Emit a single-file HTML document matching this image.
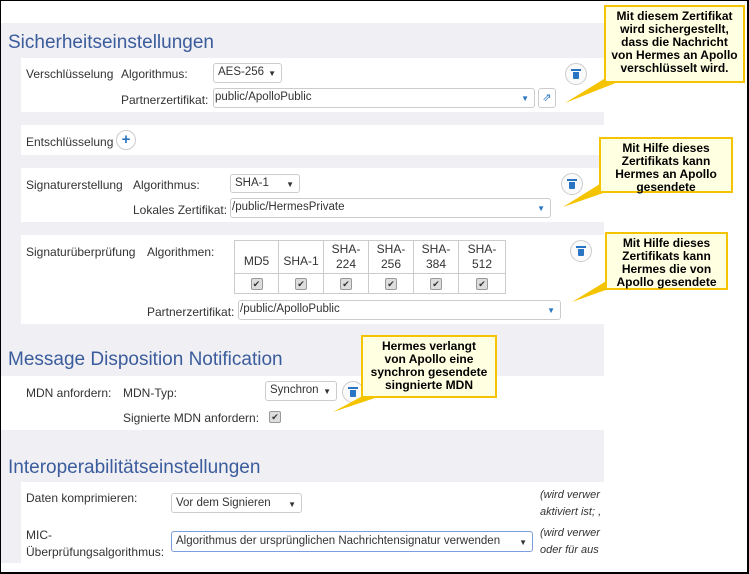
<!DOCTYPE html>
<html><head><meta charset="utf-8"><style>
*{box-sizing:border-box;margin:0;padding:0}
body{width:749px;height:574px;position:relative;overflow:hidden;background:#fff;font-family:"Liberation Sans",sans-serif;font-size:12px;color:#333}
.frame{position:absolute;left:0;top:0;width:749px;height:574px;border:1px solid #000;border-width:1px 2px 2px 1px;z-index:50;pointer-events:none}
.a{position:absolute;white-space:nowrap}
.gray{position:absolute;background:#efeff4}
.panel{position:absolute;background:#fff;left:21px;width:583px}
.h{position:absolute;left:8px;font-size:19px;color:#3b5c9c}
.sel{position:absolute;border:1px solid #ccc;border-radius:3px;background:#fff;padding-left:4px;line-height:17px;overflow:hidden;font-size:11.5px;white-space:nowrap}
.sel .ar{position:absolute;right:5px;top:1px;font-size:8px;color:#333}
.inp .ar{color:#2a74c4}
.trash{position:absolute;width:22px;height:22px;border:1px solid #ccc;border-radius:50%;background:#fafafa}
.trash:before{content:"";position:absolute;left:7px;top:8px;width:6px;height:7px;background:#2a74c4;border-radius:0 0 1px 1px}
.trash:after{content:"";position:absolute;left:5px;top:5px;width:10px;height:2px;background:#2a74c4}
.cb{display:inline-block;width:12px;height:12px;border:1px solid #999;border-radius:2px;background:#ddd;font-size:9px;line-height:10px;text-align:center;color:#333;vertical-align:middle}
.call{position:absolute;background:#ffffe1;border:2px solid #f5c400;font-weight:bold;font-size:12px;color:#000;text-align:center;line-height:13px;z-index:20;padding-top:3px}
table{position:absolute;left:234px;top:240px;border-collapse:collapse}
td{border:1px solid #ccc;text-align:center;font-size:12px;line-height:15px;padding:0;height:33px}
tr.c td{height:20px}
.it{font-style:italic;color:#333}
</style></head><body>
<div class="frame"></div>
<div class="gray" style="left:1px;top:23px;width:603px;height:353px"></div>
<div class="gray" style="left:1px;top:430px;width:603px;height:133px"></div>

<div class="h" style="top:32px">Sicherheitseinstellungen</div>
<div class="panel" style="top:58px;height:54px"></div>
<div class="a" style="left:26px;top:67px">Verschlüsselung</div>
<div class="a" style="left:121px;top:67px">Algorithmus:</div>
<div class="sel" style="left:213px;top:63px;width:69px;height:20px">AES-256<span class="ar">▼</span></div>
<div class="a" style="left:121px;top:93px">Partnerzertifikat:</div>
<div class="sel inp" style="left:213px;top:88px;width:322px;height:20px;padding-left:1px">public/ApolloPublic<span class="ar">▼</span></div>
<div class="a" style="left:538px;top:88px;width:18px;height:20px;border:1px solid #ccc;border-radius:3px;color:#2a74c4;font-size:11px;text-align:center;line-height:18px">⇗</div>
<div class="trash" style="left:565px;top:63px"></div>

<div class="panel" style="top:125px;height:30px"></div>
<div class="a" style="left:26px;top:135px">Entschlüsselung</div>
<div class="a" style="left:116px;top:130px;width:20px;height:20px;border:1px solid #ccc;border-radius:50%;color:#2a74c4;font-weight:bold;font-size:15px;text-align:center;line-height:18px">+</div>

<div class="panel" style="top:168px;height:54px"></div>
<div class="a" style="left:26px;top:178px">Signaturerstellung</div>
<div class="a" style="left:133px;top:178px">Algorithmus:</div>
<div class="sel" style="left:230px;top:174px;width:70px;height:19px">SHA-1<span class="ar">▼</span></div>
<div class="a" style="left:133px;top:203px">Lokales Zertifikat:</div>
<div class="sel inp" style="left:230px;top:198px;width:321px;height:20px;padding-left:1px">/public/HermesPrivate<span class="ar">▼</span></div>
<div class="trash" style="left:561px;top:173px"></div>

<div class="panel" style="top:235px;height:89px"></div>
<div class="a" style="left:26px;top:245px">Signaturüberprüfung</div>
<div class="a" style="left:147px;top:245px">Algorithmen:</div>
<table>
<tr><td style="width:44px;padding-top:8px">MD5</td><td style="width:45px;padding-top:8px">SHA-1</td><td style="width:45px">SHA-<br>224</td><td style="width:45px">SHA-<br>256</td><td style="width:45px">SHA-<br>384</td><td style="width:47px">SHA-<br>512</td></tr>
<tr class="c"><td><span class="cb">✔</span></td><td><span class="cb">✔</span></td><td><span class="cb">✔</span></td><td><span class="cb">✔</span></td><td><span class="cb">✔</span></td><td><span class="cb">✔</span></td></tr>
</table>
<div class="a" style="left:147px;top:305px">Partnerzertifikat:</div>
<div class="sel inp" style="left:238px;top:300px;width:323px;height:20px;padding-left:1px">/public/ApolloPublic<span class="ar">▼</span></div>
<div class="trash" style="left:570px;top:240px"></div>

<div class="h" style="top:349px">Message Disposition Notification</div>
<div class="panel" style="top:376px;height:54px"></div>
<div class="a" style="left:26px;top:386px">MDN anfordern:</div>
<div class="a" style="left:123px;top:386px">MDN-Typ:</div>
<div class="sel" style="left:265px;top:381px;width:72px;height:20px">Synchron<span class="ar">▼</span></div>
<div class="trash" style="left:342px;top:381px"></div>
<div class="a" style="left:123px;top:411px">Signierte MDN anfordern:</div>
<div class="a" style="left:269px;top:409px"><span class="cb">✔</span></div>

<div class="h" style="top:457px">Interoperabilitätseinstellungen</div>
<div class="panel" style="top:482px;height:81px"></div>
<div class="a" style="left:26px;top:491px">Daten komprimieren:</div>
<div class="sel" style="left:171px;top:493px;width:131px;height:20px;line-height:19px">Vor dem Signieren<span class="ar">▼</span></div>
<div class="a it" style="left:540px;top:489px;font-size:11px">(wird verwer</div>
<div class="a it" style="left:540px;top:506px;font-size:11px">aktiviert ist; ,</div>
<div class="a" style="left:26px;top:528px">MIC-</div>
<div class="a" style="left:26px;top:545px">Überprüfungsalgorithmus:</div>
<div class="sel" style="left:171px;top:531px;width:362px;height:21px;border-color:#7c9de0;padding-left:4px;line-height:19px">Algorithmus der ursprünglichen Nachrichtensignatur verwenden<span class="ar">▼</span></div>
<div class="a it" style="left:540px;top:527px;font-size:11px">(wird verwer</div>
<div class="a it" style="left:540px;top:544px;font-size:11px">oder für aus</div>
<div style="position:absolute;left:604px;top:0;width:143px;height:572px;background:#fff;z-index:5"></div>

<svg style="position:absolute;left:0;top:0;z-index:19" width="749" height="574">
<polygon points="612,74 565,103 618,82" fill="#f5c400"/>
<polygon points="603,182 563,207 612,190" fill="#f5c400"/>
<polygon points="608,280 572,302 614,287" fill="#f5c400"/>
<polygon points="370,392 333,412 378,397" fill="#f5c400"/>
</svg>
<div class="call" style="left:604px;top:5px;width:141px;height:78px">Mit diesem Zertifikat<br>wird sichergestellt,<br>dass die Nachricht<br>von Hermes an Apollo<br>verschlüsselt wird.</div>
<div class="call" style="left:599px;top:137px;width:134px;height:56px">Mit Hilfe dieses<br>Zertifikats kann<br>Hermes an Apollo<br>gesendete</div>
<div class="call" style="left:605px;top:232px;width:123px;height:58px">Mit Hilfe dieses<br>Zertifikats kann<br>Hermes die von<br>Apollo gesendete</div>
<div class="call" style="left:361px;top:335px;width:136px;height:63px">Hermes verlangt<br>von Apollo eine<br>synchron gesendete<br>singnierte MDN</div>
</body></html>
